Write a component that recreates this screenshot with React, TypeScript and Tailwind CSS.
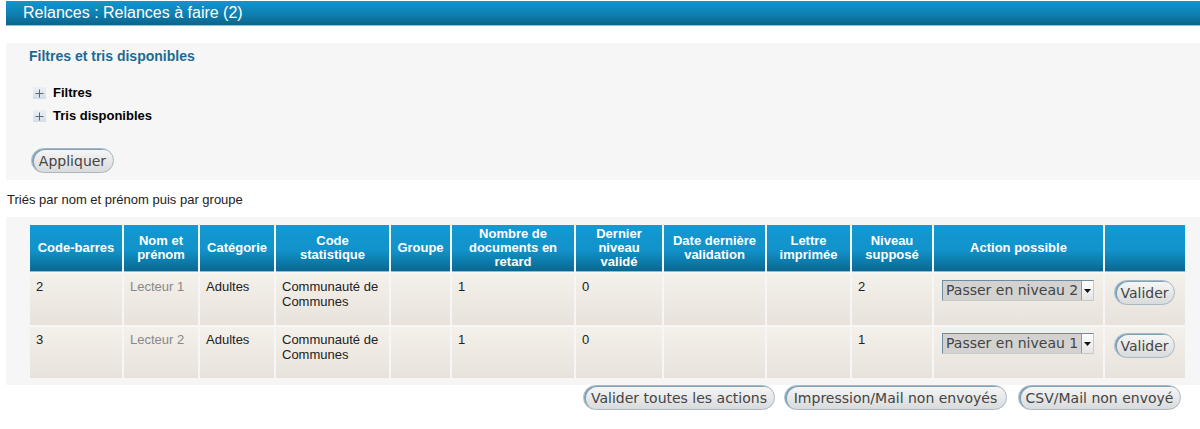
import React from 'react';

type Row = {
  code: string;
  name: string;
  category: string;
  stat: string;
  late: string;
  lastLevel: string;
  level: string;
  action: string;
};

const rows: Row[] = [
  { code: '2', name: 'Lecteur 1', category: 'Adultes', stat: 'Communauté de Communes', late: '1', lastLevel: '0', level: '2', action: 'Passer en niveau 2' },
  { code: '3', name: 'Lecteur 2', category: 'Adultes', stat: 'Communauté de Communes', late: '1', lastLevel: '0', level: '1', action: 'Passer en niveau 1' },
];

const headers: { label: React.ReactNode; width: number }[] = [
  { label: 'Code-barres', width: 92 },
  { label: 'Nom et prénom', width: 74 },
  { label: 'Catégorie', width: 74 },
  { label: <>Code<br />statistique</>, width: 113 },
  { label: 'Groupe', width: 59 },
  { label: 'Nombre de documents en retard', width: 122 },
  { label: 'Dernier niveau validé', width: 86 },
  { label: 'Date dernière validation', width: 101 },
  { label: 'Lettre imprimée', width: 83 },
  { label: 'Niveau supposé', width: 80 },
  { label: 'Action possible', width: 169 },
  { label: '', width: 80 },
];

function PillButton({ children, className = '' }: { children: React.ReactNode; className?: string }) {
  return (
    <button
      className={`h-[25px] whitespace-nowrap rounded-full border border-[#a8b8c3] bg-[linear-gradient(to_bottom,#f7f7f7,#d9dadb)] px-0 text-center font-['DejaVu_Sans',sans-serif] text-[14px] leading-none text-[#444] shadow-[inset_2px_1px_0_#7ea2b8] ${className}`}
    >
      {children}
    </button>
  );
}

function PlusBox() {
  return (
    <span className="flex h-[12px] w-[13px] items-center justify-center bg-[linear-gradient(to_bottom,#eaf0f6,#d2dee9)]">
      <svg width="9" height="9" viewBox="0 0 9 9">
        <path d="M4.5 0.5v8M0.5 4.5h8" stroke="#666" strokeWidth="1" />
      </svg>
    </span>
  );
}

function LevelSelect({ value }: { value: string }) {
  return (
    <div className="flex h-[21px] w-[152px] border border-t-[#6b8ea4] border-l-[#6b8ea4] border-r-[#c9c9c9] border-b-[#c9c9c9] bg-[#d3d2d1]">
      <span className="flex-1 overflow-hidden whitespace-nowrap pl-[3px] font-['DejaVu_Sans',sans-serif] text-[14px] leading-[19px] text-[#444]">
        {value}
      </span>
      <span className="flex h-[19px] w-[12px] items-center justify-center border-l border-[#999] bg-[linear-gradient(to_bottom,#ffffff,#e4e4e4)]">
        <svg width="7" height="4" viewBox="0 0 7 4">
          <path d="M0 0h7L3.5 4z" fill="#111" />
        </svg>
      </span>
    </div>
  );
}

export default function RelancesPage() {
  const cellClass =
    "align-top bg-[linear-gradient(to_bottom,#f4f0ea,#e8e2dc)] px-[6px] pt-[5px] text-[13px] leading-[15px] text-[#222]";

  return (
    <div className="min-h-[429px] bg-white pl-[6px] font-['Liberation_Sans',Arial,sans-serif]">
      <div className="mt-[1px] flex h-[25px] items-center border-b border-[#8fc3da] bg-[linear-gradient(to_bottom,#1395cd,#0e7fb0_55%,#0a658a)] pl-[17px] text-[16px] text-white">
        Relances : Relances à faire (2)
      </div>

      <div className="mt-[17px] bg-[#f6f6f6] px-[23px] pb-[7px] pt-[5px]">
        <div className="h-[17px] text-[14px] font-bold leading-[17px] text-[#1b6a94]">Filtres et tris disponibles</div>
        <div className="ml-[4px] mt-[19px] flex h-[18px] items-center gap-[7px] text-[13px] font-bold text-black">
          <PlusBox />
          Filtres
        </div>
        <div className="ml-[4px] mt-[5px] flex h-[18px] items-center gap-[7px] text-[13px] font-bold text-black">
          <PlusBox />
          Tris disponibles
        </div>
        <div className="mt-[23px]">
          <PillButton className="ml-[2px] w-[83px]">Appliquer</PillButton>
        </div>
      </div>

      <div className="ml-[1px] mt-[12px] h-[15px] text-[13px] leading-[15px] text-[#222]">Triés par nom et prénom puis par groupe</div>

      <div className="mt-[10px] bg-[#f6f6f6] pb-[5px] pl-[22px] pt-[6px]">
        <table className="w-[1159px] table-fixed border-separate border-spacing-[2px]">
          <colgroup>
            {headers.map((h, i) => (
              <col key={i} style={{ width: h.width }} />
            ))}
          </colgroup>
          <thead>
            <tr className="h-[47px]">
              {headers.map((h, i) => (
                <th
                  key={i}
                  className="border-b border-[#86bfd8] bg-[linear-gradient(to_bottom,#1499d2,#1192ca_55%,#0a6890)] px-[4px] text-center align-middle text-[13px] font-bold leading-[14px] text-white"
                >
                  {h.label}
                </th>
              ))}
            </tr>
          </thead>
          <tbody>
            {rows.map((r) => (
              <tr key={r.code} className="h-[51px]">
                <td className={cellClass}>{r.code}</td>
                <td className={`${cellClass} text-[#888]`}>{r.name}</td>
                <td className={cellClass}>{r.category}</td>
                <td className={cellClass}>{r.stat}</td>
                <td className={cellClass}></td>
                <td className={cellClass}>{r.late}</td>
                <td className={cellClass}>{r.lastLevel}</td>
                <td className={cellClass}></td>
                <td className={cellClass}></td>
                <td className={cellClass}>{r.level}</td>
                <td className={`${cellClass} pl-[8px] pt-[6px]`}>
                  <LevelSelect value={r.action} />
                </td>
                <td className={`${cellClass} pl-[9px] pt-[6px]`}>
                  <PillButton className="w-[61px]">Valider</PillButton>
                </td>
              </tr>
            ))}
          </tbody>
        </table>
      </div>

      <div className="flex justify-end pr-[19px]">
        <PillButton className="w-[192px]">Valider toutes les actions</PillButton>
        <PillButton className="ml-[9px] w-[223px]">Impression/Mail non envoyés</PillButton>
        <PillButton className="ml-[11px] w-[163px]">CSV/Mail non envoyé</PillButton>
      </div>
    </div>
  );
}
